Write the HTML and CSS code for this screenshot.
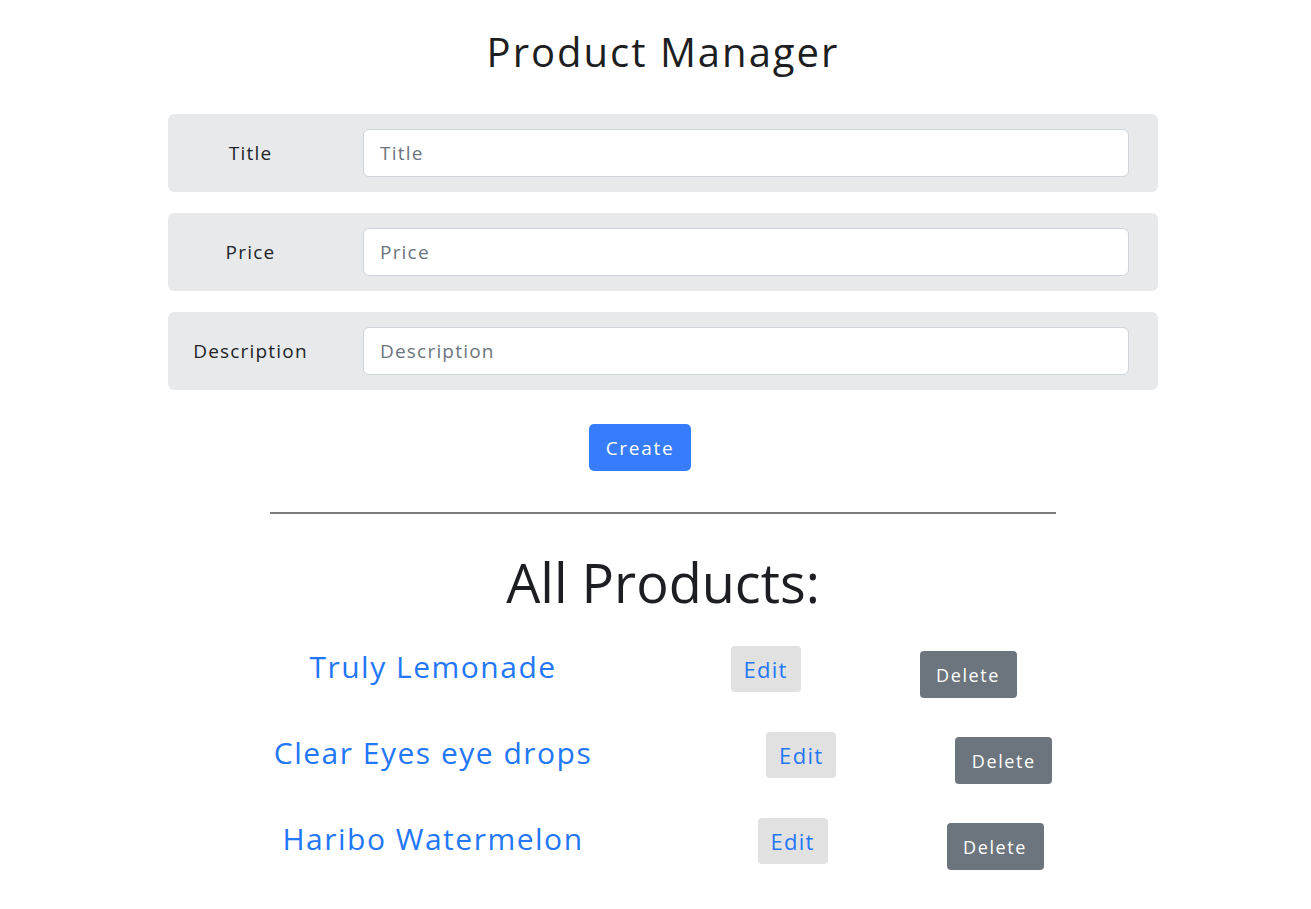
FILE: index.html
```html
<!DOCTYPE html>
<html lang="en">
<head>
<meta charset="utf-8">
<title>Product Manager</title>
<link rel="stylesheet" href="styles.css">
</head>
<body>
<div class="page">
  <h1 class="title">Product Manager</h1>
  <form class="form">
    <div class="form-row">
      <label class="form-label" for="t">Title</label>
      <input class="form-input" id="t" type="text" placeholder="Title">
    </div>
    <div class="form-row">
      <label class="form-label" for="p">Price</label>
      <input class="form-input" id="p" type="text" placeholder="Price">
    </div>
    <div class="form-row">
      <label class="form-label" for="d">Description</label>
      <input class="form-input" id="d" type="text" placeholder="Description">
    </div>
    <div class="form-actions">
      <button class="btn-create" type="button">Create</button>
    </div>
  </form>
  <hr class="divider">
  <h2 class="subtitle">All Products:</h2>
  <div class="products">
    <div class="product">
      <a class="product-name" href="#">Truly Lemonade</a>
      <a class="btn-edit" href="#">Edit</a>
      <button class="btn-delete" type="button">Delete</button>
    </div>
    <div class="product">
      <a class="product-name" href="#">Clear Eyes eye drops</a>
      <a class="btn-edit" href="#">Edit</a>
      <button class="btn-delete" type="button">Delete</button>
    </div>
    <div class="product">
      <a class="product-name" href="#">Haribo Watermelon</a>
      <a class="btn-edit" href="#">Edit</a>
      <button class="btn-delete" type="button">Delete</button>
    </div>
  </div>
</div>
</body>
</html>
```
FILE: styles.css
```css
* { box-sizing: border-box; }
body {
  margin: 0;
  font-family: "Open Sans", "Noto Sans", sans-serif;
  color: #212529;
  background: #fff;
}
.page {
  padding-left: 15px;
  display: flex;
  flex-direction: column;
  align-items: center;
}
.title {
  margin: 24px 0 0;
  font-size: 40px;
  font-weight: 400;
  line-height: 56px;
  letter-spacing: 2px;
  color: #1c1e21;
}
.form {
  width: 990px;
  margin-top: 34px;
  display: flex;
  flex-direction: column;
  gap: 21px;
}
.form-row {
  display: flex;
  align-items: center;
  gap: 30px;
  background: #e8e9eb;
  border-radius: 6px;
  padding: 15px 29px 15px 0;
}
.form-label {
  width: 165px;
  text-align: center;
  font-size: 19px;
  letter-spacing: 1.2px;
}
.form-input {
  flex: 1;
  height: 48px;
  border: 1px solid #ced4da;
  border-radius: 6px;
  padding: 0 16px;
  font: inherit;
  font-size: 19px;
  letter-spacing: 1.2px;
  color: #212529;
  background: #fff;
}
.form-input::placeholder { color: #6c757d; }
.form-actions {
  display: flex;
  justify-content: center;
  margin-top: 13px;
}
.btn-create {
  width: 102px;
  height: 47px;
  margin-right: 46px;
  border: none;
  border-radius: 5px;
  background: #377dfb;
  color: #fff;
  font: inherit;
  font-size: 19px;
  letter-spacing: 1.7px;
}
.divider {
  width: 786px;
  margin: 41px 0 0;
  border: none;
  border-top: 2px solid #7a7a7a;
}
.subtitle {
  margin: 36px 0 0;
  font-size: 54px;
  font-weight: 400;
  line-height: 64px;
  color: #1c1e21;
}
.products {
  margin-top: 32px;
  display: flex;
  flex-direction: column;
  gap: 34px;
  align-items: center;
}
.product {
  display: flex;
  align-items: flex-start;
}
.product-name {
  color: #2477f6;
  text-decoration: none;
  font-size: 30px;
  line-height: 42px;
  letter-spacing: 1.5px;
  margin-right: 174px;
}
.btn-edit {
  width: 70px;
  height: 46px;
  display: flex;
  align-items: center;
  justify-content: center;
  background: #e2e1e1;
  border-radius: 4px;
  color: #2477f6;
  text-decoration: none;
  font-size: 22px;
  letter-spacing: 1.3px;
  margin-right: 119px;
}
.btn-delete {
  margin-top: 5px;
  width: 97px;
  height: 47px;
  border: none;
  border-radius: 4px;
  background: #6c757d;
  color: #fff;
  font: inherit;
  font-size: 18px;
  letter-spacing: 1.6px;
}
```
